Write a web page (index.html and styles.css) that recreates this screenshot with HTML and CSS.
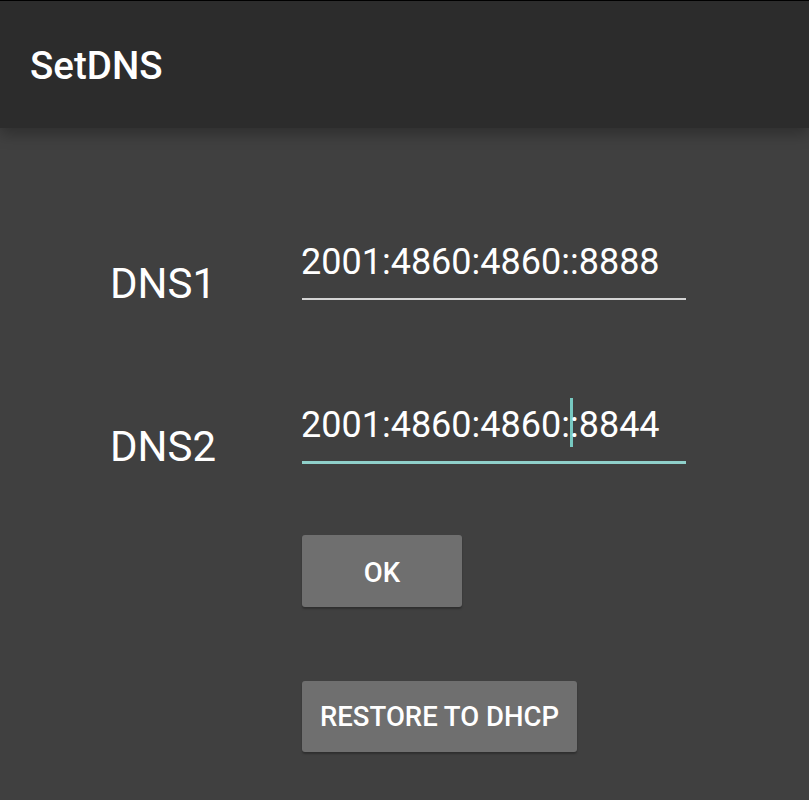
FILE: index.html
```html
<!DOCTYPE html>
<html>
<head>
<meta charset="utf-8">
<title>SetDNS</title>
<link rel="stylesheet" href="styles.css">
</head>
<body>
<div class="app">
  <header class="toolbar">
    <h1 class="title">SetDNS</h1>
  </header>
  <main class="content">
    <div class="form">
      <div class="label">DNS1</div>
      <div class="field">2001:4860:4860::8888</div>
      <div class="label second">DNS2</div>
      <div class="field focused second">2001:4860:4860:<span class="cursor"></span>:8844</div>
      <div class="actions">
        <button class="btn btn-ok">OK</button>
        <button class="btn btn-restore">RESTORE TO DHCP</button>
      </div>
    </div>
  </main>
</div>
</body>
</html>
```

FILE: styles.css
```css
* { box-sizing: border-box; }
html, body { margin: 0; padding: 0; }
body {
  background: #404040;
  font-family: Roboto, "Noto Sans", sans-serif;
  color: #fafafa;
  width: 809px;
  height: 800px;
  overflow: hidden;
}
.app {
  display: flex;
  flex-direction: column;
  height: 800px;
}
.toolbar {
  position: relative;
  z-index: 2;
  height: 128px;
  background: #2c2c2c;
  border-top: 1px solid #000;
  padding: 46px 0 0 30px;
  box-shadow: 0 6px 14px rgba(0, 0, 0, 0.28);
}
.title {
  margin: 0;
  font-size: 38.5px;
  line-height: 38px;
  font-weight: 500;
  color: #ffffff;
}
.content {
  flex: 1;
  background: #404040;
  padding: 114px 0 0 110px;
}
.form {
  display: grid;
  grid-template-columns: 192px 384px;
  align-items: start;
}
.label {
  font-size: 42px;
  line-height: 42px;
  margin-top: 21px;
  margin-bottom: -10px;
  color: #ffffff;
}
.field {
  font-size: 36px;
  line-height: 40px;
  height: 58px;
  padding-bottom: 16px;
  border-bottom: 2px solid #d4d4d4;
  color: #ffffff;
  text-indent: -1px;
  white-space: nowrap;
}
.field.second { margin-top: 105px; }
.label.second { margin-top: 126px; }
.field.focused {
  height: 59px;
  border-bottom: 3px solid #8fd0ca;
}
.cursor {
  display: inline-block;
  width: 3px;
  height: 49px;
  background: #77c9c1;
  vertical-align: 2px;
  margin: -10px -3px -12px 0;
}
.actions {
  grid-column: 2;
  display: flex;
  flex-direction: column;
  align-items: flex-start;
  gap: 74px;
  margin-top: 71px;
}
.btn {
  border: none;
  border-radius: 3px;
  background: #6f6f6f;
  color: #ffffff;
  font-family: Roboto, "Noto Sans", sans-serif;
  font-size: 27.5px;
  font-weight: 500;
  padding: 0;
  box-shadow: 0 2px 2px rgba(0, 0, 0, 0.28);
}
.btn-ok {
  width: 160px;
  height: 72px;
  padding-top: 2px;
}
.btn-restore {
  width: 275px;
  height: 71px;
}
```
